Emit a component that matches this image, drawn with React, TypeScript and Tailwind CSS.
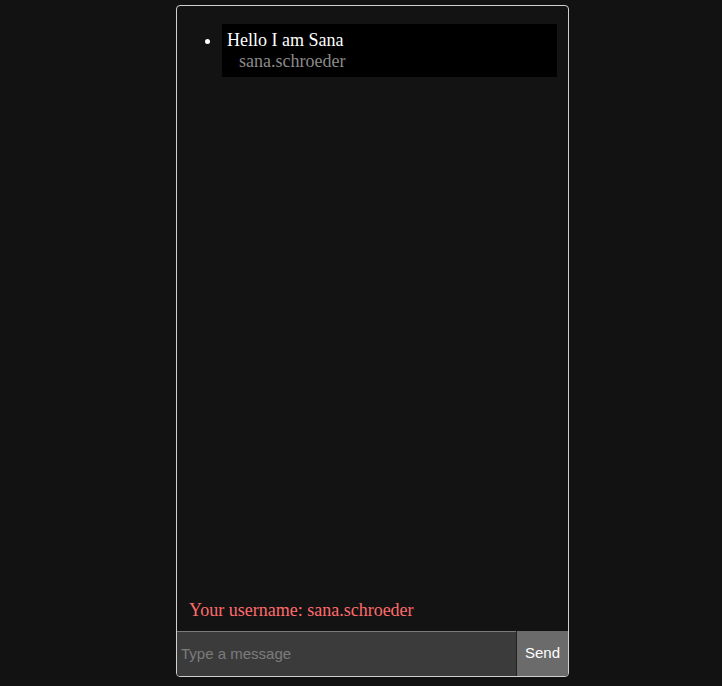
export default function App() {
  return (
    <div className="flex h-[686px] w-full bg-[#121212]">
      <div className="ml-[176px] mt-[5px] flex h-[672px] w-[393px] flex-col overflow-hidden rounded-[4px] border border-[#d0d0d0] bg-[#131313]">
        <ul className="mt-[18px] flex-1 list-disc pl-[45px] pr-[11px] text-white marker:text-white" style={{ fontFamily: '"Liberation Serif", serif' }}>
          <li className="bg-black px-[5px] pt-[6px] pb-[5px] text-[18px] leading-[21px]">
            <div className="text-white">Hello I am Sana</div>
            <div className="pl-[12px] text-[#8a8a8a]">sana.schroeder</div>
          </li>
        </ul>
        <div className="mb-[10px] px-[12px] text-[18px] leading-[21px] text-[#ff6b6b]" style={{ fontFamily: '"Liberation Serif", serif' }}>
          Your username: sana.schroeder
        </div>
        <div className="flex h-[45px]" style={{ fontFamily: '"Liberation Sans", Arial, sans-serif' }}>
          <input
            className="min-w-0 flex-1 border-t border-[#7a7a7a] bg-[#3b3b3b] px-[4px] text-[15px] text-white outline-none placeholder:text-[#7b7b7b]"
            placeholder="Type a message"
          />
          <button className="w-[52px] border-l border-[#222] bg-[#6b6b6b] text-[15px] text-white">Send</button>
        </div>
      </div>
    </div>
  );
}
